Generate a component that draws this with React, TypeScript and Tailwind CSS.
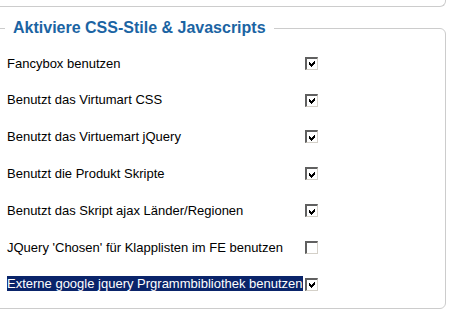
const rows: { label: string; checked: boolean; selected?: boolean }[] = [
  { label: 'Fancybox benutzen', checked: true },
  { label: 'Benutzt das Virtumart CSS', checked: true },
  { label: 'Benutzt das Virtuemart jQuery', checked: true },
  { label: 'Benutzt die Produkt Skripte', checked: true },
  { label: 'Benutzt das Skript ajax Länder/Regionen', checked: true },
  { label: "JQuery 'Chosen' für Klapplisten im FE benutzen", checked: false },
  { label: 'Externe google jquery Prgrammbibliothek benutzen', checked: true, selected: true },
];

function ClassicCheckbox({ checked }: { checked: boolean }) {
  return (
    <div className="w-[13px] h-[13px] border-t-2 border-l-2 border-t-[#606060] border-l-[#606060] border-b border-r border-b-[#d4d0c8] border-r-[#d4d0c8] bg-white flex items-center justify-center">
      {checked && (
        <svg width="9" height="9" viewBox="0 0 9 9" shapeRendering="crispEdges">
          <path d="M1 3 L3 5 L7 1 L7 4 L3 8 L1 6 Z" fill="#000" />
        </svg>
      )}
    </div>
  );
}

export default function App() {
  return (
    <main className="w-[449px] h-[331px] bg-white overflow-hidden font-['Liberation_Sans',Arial,sans-serif]">
      {/* bottom of the previous fieldset */}
      <div className="ml-[-10px] w-[456px] h-[7px] border-l border-r border-b border-[#cccccc] rounded-br-[6px] rounded-bl-[6px]" />

      <fieldset className="ml-[-10px] w-[456px] mt-[11px] border border-[#cccccc] rounded-[6px] pb-[5px]">
        <legend className="ml-[14px] px-[8px] text-[16px] leading-[20px] font-bold text-[#1b64a3]">
          Aktiviere CSS-Stile &amp; Javascripts
        </legend>
        <div className="pt-[7px] pl-[16px] flex flex-col">
          {rows.map((r) => (
            <div key={r.label} className="h-[36.8px] flex items-center text-[13px] text-black">
              <div className="w-[298px] shrink-0">
                <span className={r.selected ? 'bg-[#0a246a] text-white' : ''}>{r.label}</span>
              </div>
              <ClassicCheckbox checked={r.checked} />
            </div>
          ))}
        </div>
      </fieldset>
    </main>
  );
}
